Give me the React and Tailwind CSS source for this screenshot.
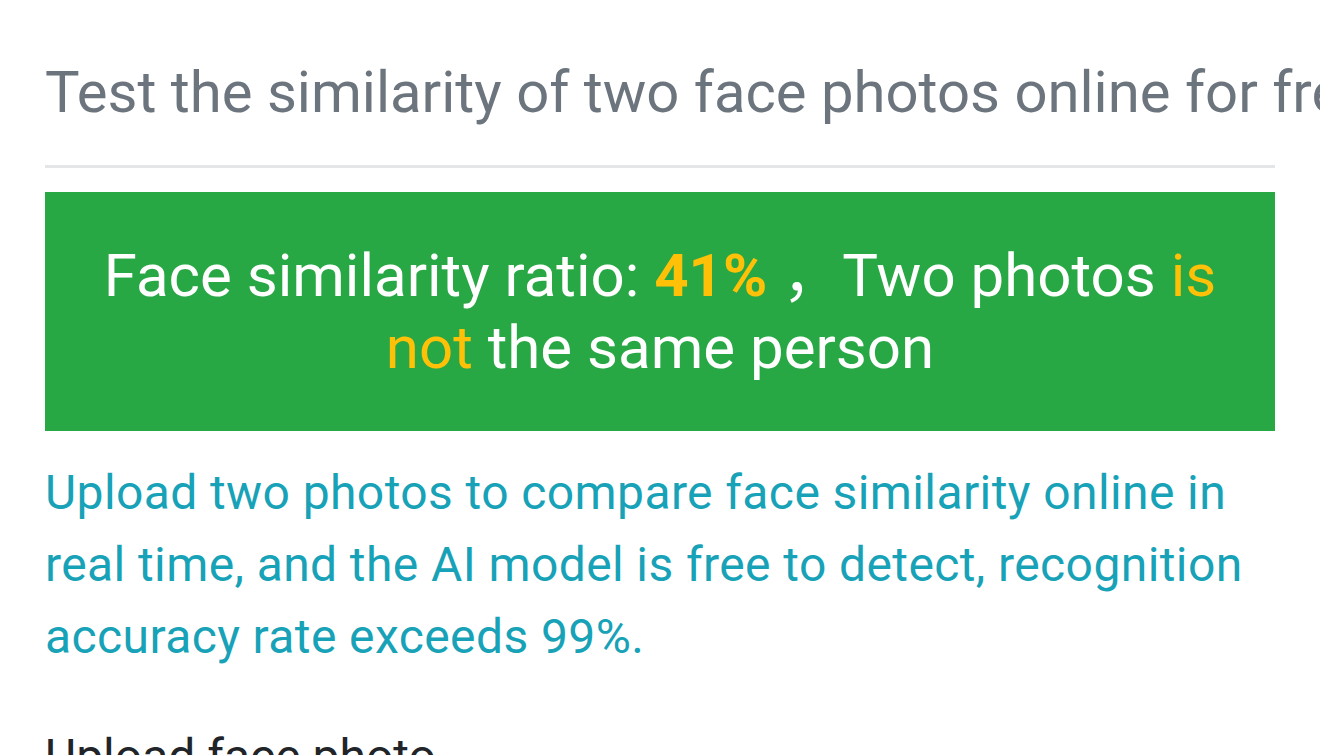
export default function App() {
  return (
    <div className="w-[1320px] h-[755px] overflow-hidden bg-white font-['Roboto','Liberation_Sans','Noto_Sans_CJK_SC',sans-serif]">
      <div className="px-[45px] pt-[58px]">
        {/* heading */}
        <h1 className="whitespace-nowrap text-[58px] leading-[1.2] font-normal text-[#6c757d]">
          Test the similarity of two face photos online for free
        </h1>
        <hr className="mt-[37px] border-t-[3px] border-[#e4e6e8]" />

        {/* result banner */}
        <div className="mt-[24px] bg-[#28a745] pt-[48px] pb-[47px] px-[45px] text-center text-[60px] leading-[72px] text-white">
          Face similarity ratio: <span className="font-bold text-[#ffc107]">41%</span> ，Two photos{' '}
          <span className="text-[#ffc107]">is not</span> the same person
        </div>

        <p className="mt-[26px] mb-[48px] text-[48px] leading-[72px] tracking-[0.4px] text-[#17a2b8]">
          Upload two photos to compare face similarity online in real time, and the AI model is free to detect, recognition accuracy rate exceeds 99%.
        </p>

        <h2 className="text-[48px] leading-[72px] font-normal text-[#212529]">Upload face photo</h2>
      </div>
    </div>
  );
}
